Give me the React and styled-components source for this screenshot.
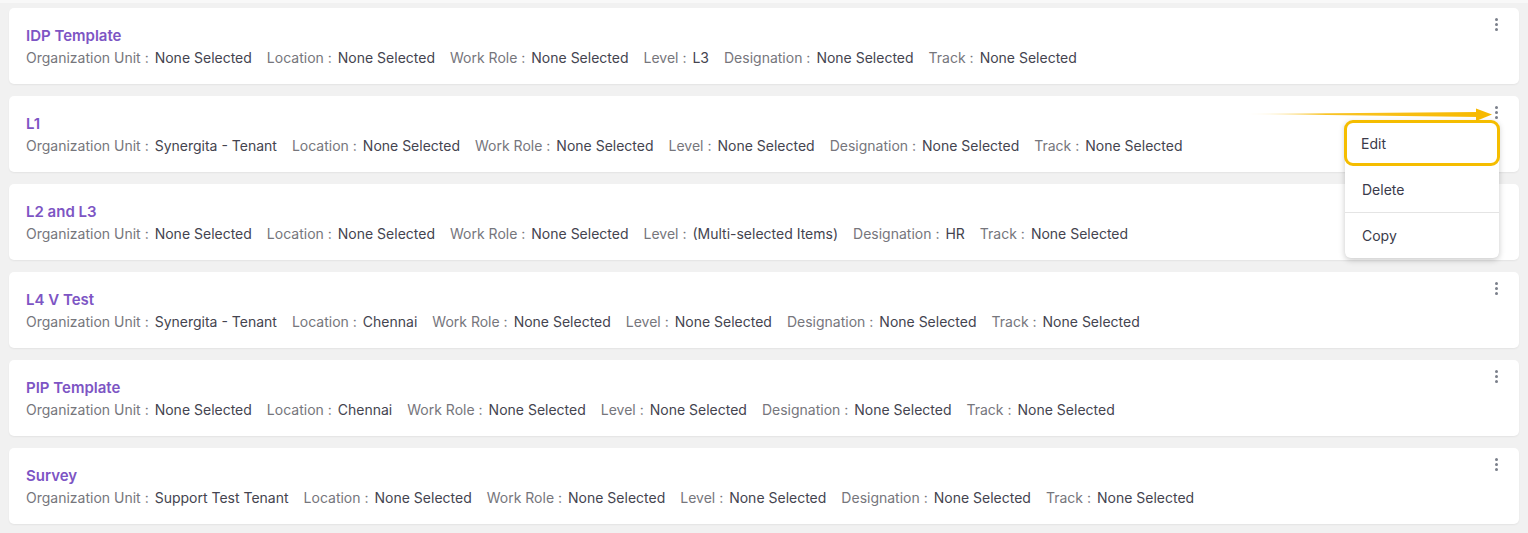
import React from "react";
import styled, { createGlobalStyle } from "styled-components";

const Global = createGlobalStyle`
  html, body { margin: 0; padding: 0; background: #f1f1f1; }
  body { font-family: "Inter", "Open Sans", sans-serif; }
`;

const Page = styled.div`
  width: 1528px;
  height: 533px;
  box-sizing: border-box;
  padding: 5px 9px 0 9px;
  background: #f1f1f1;
  border-top: 3px solid #f8f8f8;
  display: flex;
  flex-direction: column;
  gap: 12px;
  overflow: hidden;
`;

const Card = styled.div`
  position: relative;
  flex: none;
  background: #fff;
  border-radius: 5px;
  box-shadow: 0 1px 2px rgba(0, 0, 0, 0.06);
  height: 76px;
  box-sizing: border-box;
  padding: 18px 17px 0 17px;
  display: flex;
  flex-direction: column;
  gap: 4px;
`;

const Title = styled.div`
  font-size: 15px;
  font-weight: 600;
  color: #7d55c4;
  line-height: 19px;
`;

const Details = styled.div`
  display: flex;
  gap: 15px;
  font-size: 14px;
  line-height: 18px;
  white-space: nowrap;
`;

const Field = styled.span`
  display: inline-flex;
  gap: 6px;
`;

const Label = styled.span`
  color: #76767c;
`;

const Value = styled.span`
  color: #44444f;
`;

const Kebab = styled.button`
  position: absolute;
  top: 7px;
  right: 17px;
  width: 12px;
  height: 18px;
  border: 0;
  padding: 0;
  background: transparent;
  display: flex;
  flex-direction: column;
  align-items: center;
  justify-content: center;
  gap: 2px;
  span {
    width: 3px;
    height: 3px;
    border-radius: 50%;
    background: #7a7f8a;
  }
`;

const Menu = styled.div`
  position: absolute;
  top: 25px;
  right: 20px;
  width: 154px;
  background: #fff;
  border-radius: 6px;
  box-shadow: 0 2px 6px rgba(0, 0, 0, 0.22);
  z-index: 5;
  display: flex;
  flex-direction: column;
`;

const MenuItem = styled.div`
  height: 46px;
  box-sizing: border-box;
  display: flex;
  align-items: center;
  padding-left: 17px;
  font-size: 14px;
  color: #3a3a4a;
  border-top: ${(p) => (p.$first ? "none" : "1px solid #e4e4e4")};
  ${(p) =>
    p.$highlight &&
    `
    border: 3px solid #f5bd00;
    border-radius: 9px;
    padding-left: 14px;
    margin: -1px -1px 0 -1px;
  `}
`;

const Arrow = styled.svg`
  position: absolute;
  top: 12px;
  right: 26px;
  z-index: 6;
`;

const data = [
  {
    title: "IDP Template",
    fields: [
      ["Organization Unit", "None Selected"],
      ["Location", "None Selected"],
      ["Work Role", "None Selected"],
      ["Level", "L3"],
      ["Designation", "None Selected"],
      ["Track", "None Selected"],
    ],
  },
  {
    title: "L1",
    menu: true,
    fields: [
      ["Organization Unit", "Synergita - Tenant"],
      ["Location", "None Selected"],
      ["Work Role", "None Selected"],
      ["Level", "None Selected"],
      ["Designation", "None Selected"],
      ["Track", "None Selected"],
    ],
  },
  {
    title: "L2 and L3",
    fields: [
      ["Organization Unit", "None Selected"],
      ["Location", "None Selected"],
      ["Work Role", "None Selected"],
      ["Level", "(Multi-selected Items)"],
      ["Designation", "HR"],
      ["Track", "None Selected"],
    ],
  },
  {
    title: "L4 V Test",
    fields: [
      ["Organization Unit", "Synergita - Tenant"],
      ["Location", "Chennai"],
      ["Work Role", "None Selected"],
      ["Level", "None Selected"],
      ["Designation", "None Selected"],
      ["Track", "None Selected"],
    ],
  },
  {
    title: "PIP Template",
    fields: [
      ["Organization Unit", "None Selected"],
      ["Location", "Chennai"],
      ["Work Role", "None Selected"],
      ["Level", "None Selected"],
      ["Designation", "None Selected"],
      ["Track", "None Selected"],
    ],
  },
  {
    title: "Survey",
    fields: [
      ["Organization Unit", "Support Test Tenant"],
      ["Location", "None Selected"],
      ["Work Role", "None Selected"],
      ["Level", "None Selected"],
      ["Designation", "None Selected"],
      ["Track", "None Selected"],
    ],
  },
];

export default function App() {
  return (
    <>
      <Global />
      <Page>
        {data.map((row, i) => (
          <Card key={i} style={{ zIndex: row.menu ? 10 : 1 }}>
            <Title>{row.title}</Title>
            <Details>
              {row.fields.map(([l, v]) => (
                <Field key={l}>
                  <Label>{l} :</Label>
                  <Value>{v}</Value>
                </Field>
              ))}
            </Details>
            <Kebab aria-label="more">
              <span />
              <span />
              <span />
            </Kebab>
            {row.menu && (
              <>
                <Arrow width="250" height="14" viewBox="0 0 250 14">
                  <defs>
                    <linearGradient id="ag" x1="0" x2="1" y1="0" y2="0">
                      <stop offset="0" stopColor="#f7b900" stopOpacity="0" />
                      <stop offset="0.35" stopColor="#f7b900" stopOpacity="0.85" />
                      <stop offset="1" stopColor="#f7b900" />
                    </linearGradient>
                  </defs>
                  <polygon points="0,6 236,4 236,9" fill="url(#ag)" />
                  <polygon points="233,0.5 249,6.5 233,13" fill="#f7b900" />
                </Arrow>
                <Menu>
                  <MenuItem $first $highlight>Edit</MenuItem>
                  <MenuItem $first>Delete</MenuItem>
                  <MenuItem>Copy</MenuItem>
                </Menu>
              </>
            )}
          </Card>
        ))}
      </Page>
    </>
  );
}
